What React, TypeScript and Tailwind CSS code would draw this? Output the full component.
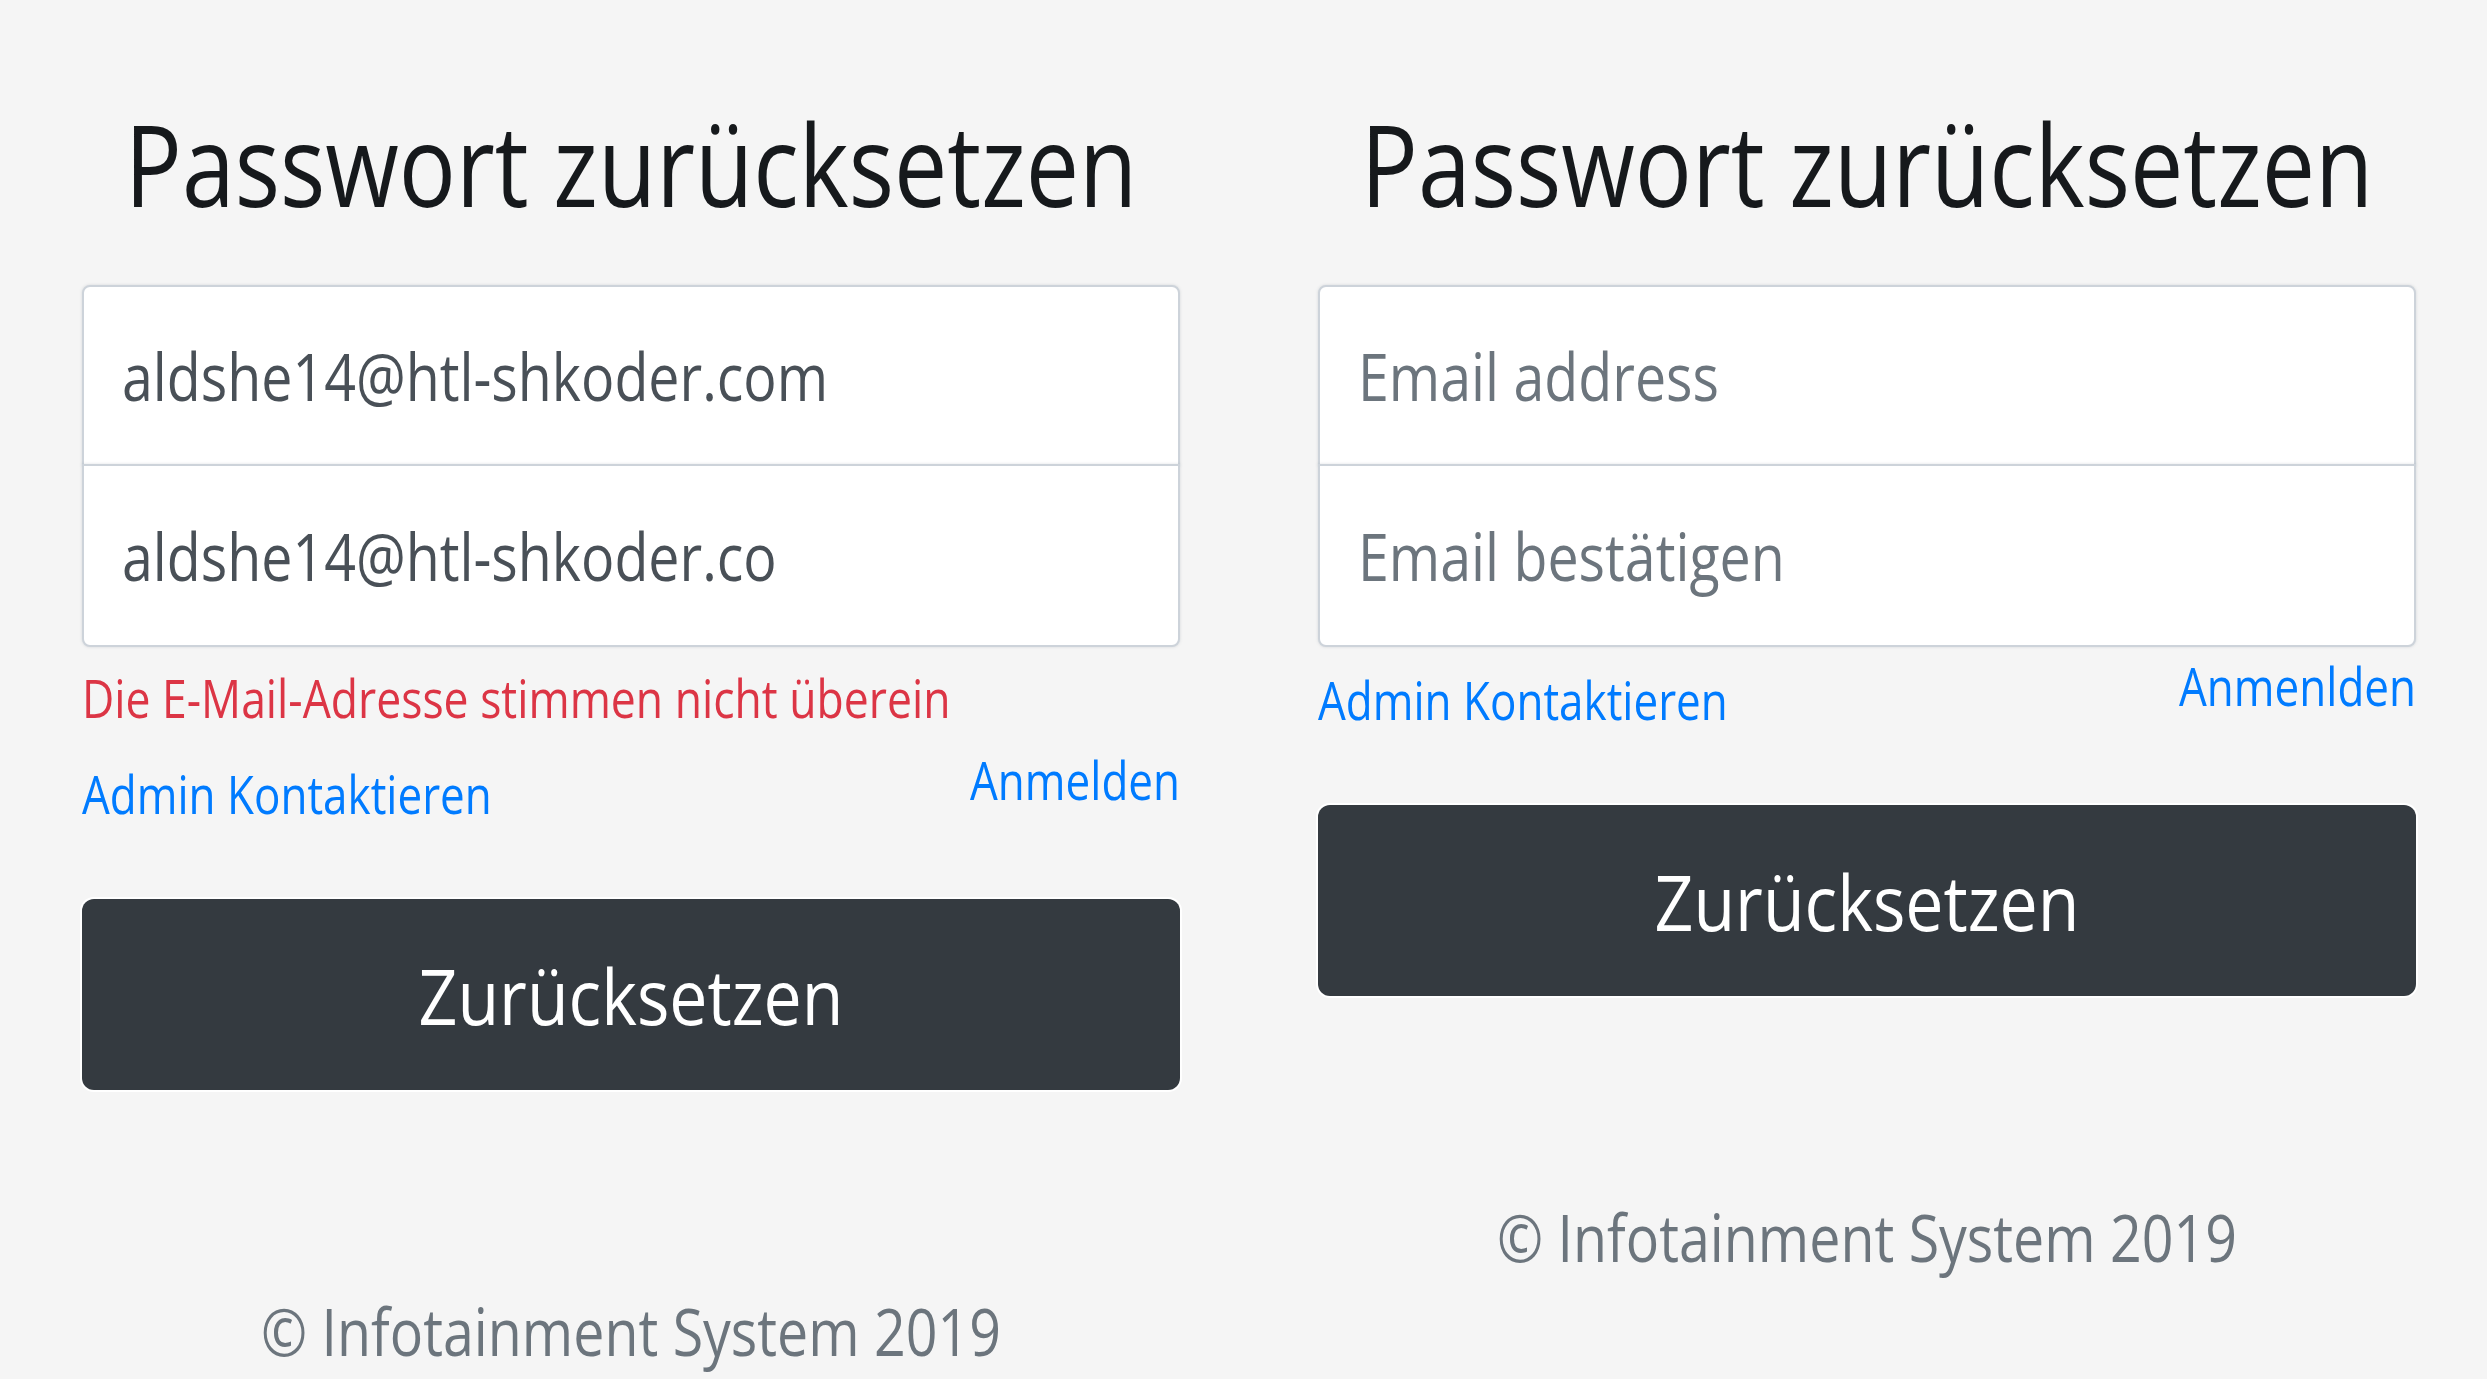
import React from "react";

const font = { fontFamily: '"Open Sans", "Noto Sans", sans-serif' };

function Panel({ v1, v2, error, login }: { v1?: string; v2?: string; error?: boolean; login: string }) {
  return (
    <div className="flex w-[1098px] flex-col">
      <h1 className="mt-[100px] h-[126px] text-center text-[95px] leading-[126px] font-normal text-[#16191c]">
        <span className="inline-block scale-y-[1.2]">Passwort zurücksetzen</span>
      </h1>
      <div className="mt-[59px] flex flex-col">
        <div className="flex h-[181px] items-center rounded-t-[8px] border-2 border-[#cdd3da] bg-white px-[38px] shadow-[0_0_3px_rgba(120,130,145,0.25)]">
          <span className={"inline-block scale-y-[1.2] text-[55.5px] " + (v1 ? "text-[#495057]" : "text-[#6c757d]")}>{v1 ?? "Email address"}</span>
        </div>
        <div className="-mt-[2px] flex h-[183px] items-center rounded-b-[8px] border-2 border-[#cdd3da] bg-white px-[38px] shadow-[0_0_3px_rgba(120,130,145,0.25)]">
          <span className={"inline-block scale-y-[1.2] text-[55.5px] " + (v2 ? "text-[#495057]" : "text-[#6c757d]")}>{v2 ?? "Email bestätigen"}</span>
        </div>
      </div>
      {error && (
        <div className="mt-[28px] h-[46px] text-[44.5px] leading-[46px] text-[#dc3545]">
          <span className="inline-block scale-y-[1.2] origin-left">Die E-Mail-Adresse stimmen nicht überein</span>
        </div>
      )}
      <div className={(error ? "mt-[48px]" : "mt-[28px]") + " flex h-[46px] items-start justify-between text-[44px] leading-[46px] text-[#007bff]"}>
        <span className="mt-[2px] inline-block scale-y-[1.2]">Admin Kontaktieren</span>
        <span className="-mt-[12px] inline-block scale-y-[1.2]">{login}</span>
      </div>
      <button className="mt-[84px] flex h-[191px] w-full items-center justify-center rounded-[12px] bg-[#343a40] text-[68px] text-white ring-2 ring-white">
        <span className="inline-block scale-y-[1.14]">Zurücksetzen</span>
      </button>
      <div className="mt-[211px] text-center text-[55.5px] leading-[60px] text-[#6c757d]">
        <span className="inline-block scale-y-[1.18]">© Infotainment System 2019</span>
      </div>
    </div>
  );
}

export default function App() {
  return (
    <div className="flex h-[1379px] w-[2487px] justify-between overflow-hidden bg-[#f5f5f5] pl-[82px] pr-[71px]" style={font}>
      <Panel v1="aldshe14@htl-shkoder.com" v2="aldshe14@htl-shkoder.co" error login="Anmelden" />
      <Panel login="Anmenlden" />
    </div>
  );
}
